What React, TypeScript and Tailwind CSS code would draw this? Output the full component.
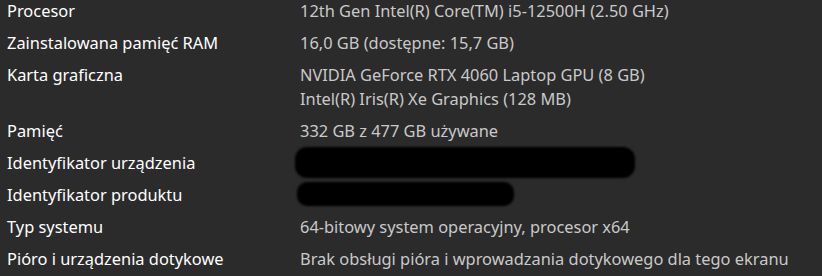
const rows: { label: string; values: string[]; redact?: 'long' | 'short' }[] = [
  { label: 'Procesor', values: ['12th Gen Intel(R) Core(TM) i5-12500H (2.50 GHz)'] },
  { label: 'Zainstalowana pamięć RAM', values: ['16,0 GB (dostępne: 15,7 GB)'] },
  {
    label: 'Karta graficzna',
    values: ['NVIDIA GeForce RTX 4060 Laptop GPU (8 GB)', 'Intel(R) Iris(R) Xe Graphics (128 MB)'],
  },
  { label: 'Pamięć', values: ['332 GB z 477 GB używane'] },
  { label: 'Identyfikator urządzenia', values: [''], redact: 'long' },
  { label: 'Identyfikator produktu', values: [''], redact: 'short' },
  { label: 'Typ systemu', values: ['64-bitowy system operacyjny, procesor x64'] },
  { label: 'Pióro i urządzenia dotykowe', values: ['Brak obsługi pióra i wprowadzania dotykowego dla tego ekranu'] },
];

export default function App() {
  return (
    <div
      className="w-[822px] h-[276px] overflow-hidden bg-[#2b2b2b] pl-[7px] pt-[1px]"
      style={{ fontFamily: '"Noto Sans", "Open Sans", sans-serif' }}
    >
      <div className="grid grid-cols-[293px_1fr] gap-y-[12px] text-[16.4px] leading-[20px]">
        {rows.map((row) => (
          <div key={row.label} className="contents">
            <div className="text-[#ffffff]">{row.label}</div>
            <div className="relative flex flex-col gap-y-[4px] text-[#c9c9c9]">
              {row.values.map((v, i) => (
                <div key={i} className="h-[20px] whitespace-nowrap">
                  {v}
                </div>
              ))}
              {row.redact === 'long' && (
                <div className="absolute left-[-5px] top-[-6px] h-[31px] w-[340px] rounded-[12px] bg-black blur-[1px]" />
              )}
              {row.redact === 'short' && (
                <div className="absolute left-[-3px] top-[-3px] h-[24px] w-[217px] rounded-[10px] bg-black blur-[1px]" />
              )}
            </div>
          </div>
        ))}
      </div>
    </div>
  );
}
